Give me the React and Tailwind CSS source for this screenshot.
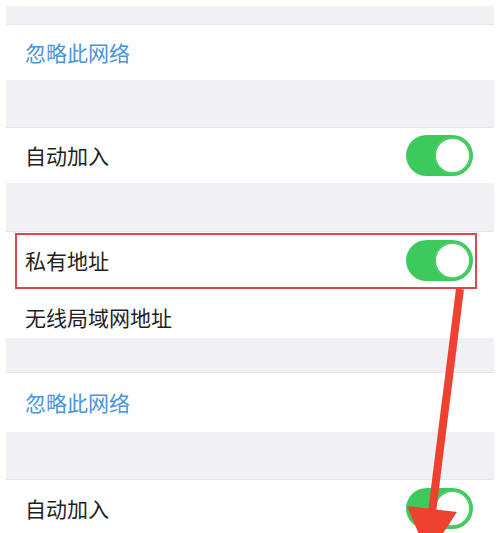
import React from "react";

const FONT = { fontFamily: '"Noto Sans CJK SC", "Noto Sans", sans-serif' };

function Toggle() {
  return (
    <div className="relative w-[67px] h-[41px] rounded-full bg-[#3ec95c]">
      <div className="absolute right-[2px] top-[2px] w-[37px] h-[37px] rounded-full bg-white border-[2px] border-[#4dd068]" />
    </div>
  );
}

function Gap({ h }) {
  return <div className={`bg-[#f0f0f5] border-b border-[#e4e4ea] ${h}`} />;
}

function Row({ h, label, blue, toggle, children, pt }) {
  return (
    <div className={`relative flex items-center justify-between bg-white pl-[19px] pr-[21px] ${h} ${pt || ""}`}>
      <span className={`text-[21px] leading-none ${blue ? "text-[#4a94d8]" : "text-[#1f1f1f]"}`}>{label}</span>
      {toggle && <Toggle />}
      {children}
    </div>
  );
}

export default function App() {
  return (
    <div className="relative w-[500px] h-[533px] overflow-hidden bg-white" style={FONT}>
      <div className="h-[6px]" />
      <div className="mx-[6px] flex flex-col">
        <Gap h="h-[19px]" />
        <Row h="h-[55px]" label="忽略此网络" blue />
        <Gap h="h-[48px]" />
        <Row h="h-[55px]" label="自动加入" toggle />
        <Gap h="h-[49px]" />
        <Row h="h-[57px]" label="私有地址" toggle>
          <div className="absolute left-[9px] right-[17px] top-[1px] bottom-0 border-2 border-[#e0474a]" />
        </Row>
        <Row h="h-[49px]" label="无线局域网地址" pt="pt-[8px]" />
        <Gap h="h-[35px]" />
        <Row h="h-[59px]" label="忽略此网络" blue />
        <Gap h="h-[48px]" />
        <Row h="h-[53px]" label="自动加入" toggle pt="pt-[4px]" />
      </div>
      <svg className="absolute inset-0 pointer-events-none" width="500" height="533" viewBox="0 0 500 533">
        <line x1="460" y1="289" x2="432" y2="512" stroke="#ee4130" strokeWidth="8" />
        <polygon points="407,506 457,512 428,556" fill="#ee4130" />
      </svg>
    </div>
  );
}
